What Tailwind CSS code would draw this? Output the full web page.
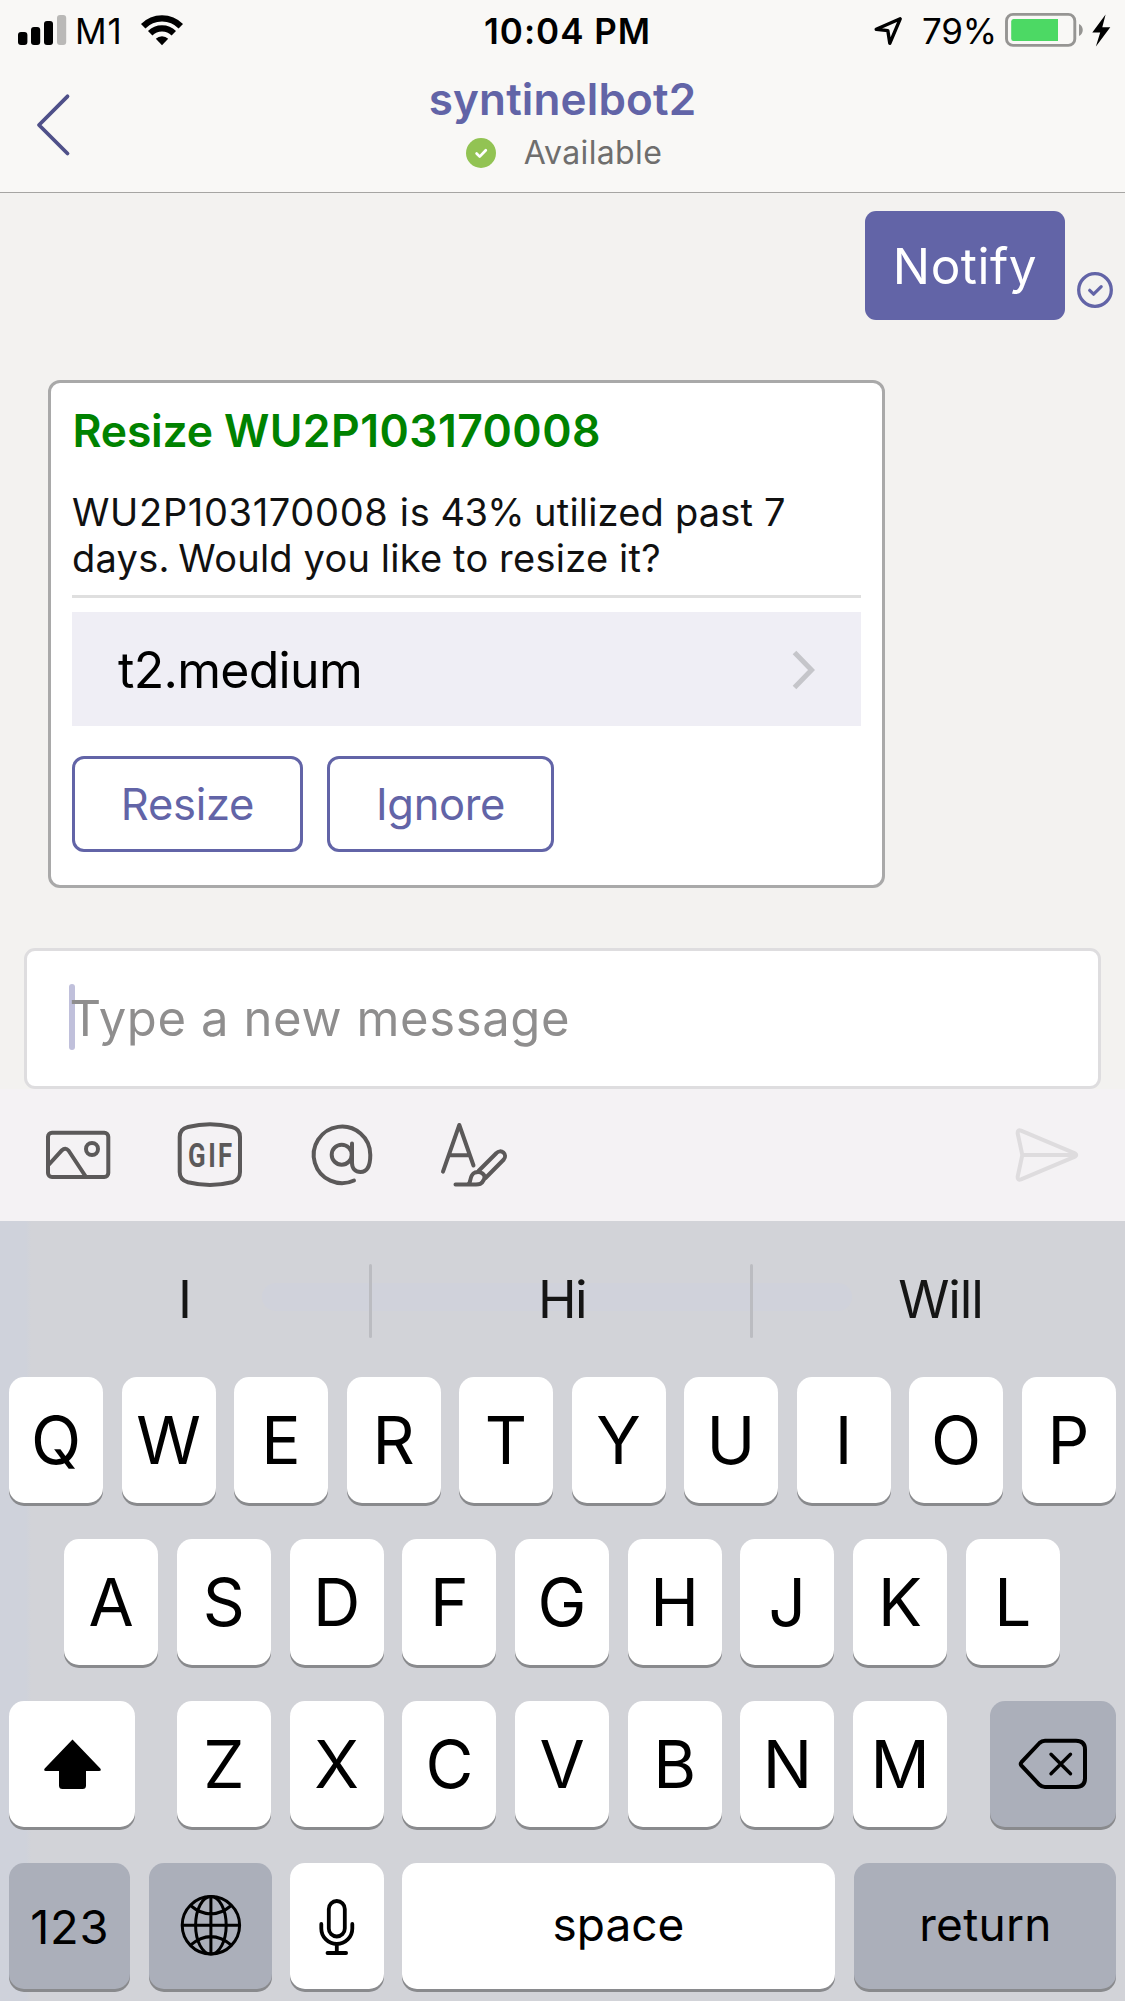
<!DOCTYPE html>
<html lang="en">
<head>
<meta charset="utf-8">
<title>syntinelbot2</title>
<script src="https://cdn.jsdelivr.net/npm/@tailwindcss/browser@4"></script>
</head>
<body class="w-[1125px] h-[2001px] overflow-hidden flex flex-col bg-[#f3f2f0] font-['Inter',sans-serif] text-black">

<header class="shrink-0 h-[193px] bg-[#f9f8f6] border-b border-[#a6a5a3]">
  <!-- Status bar -->
  <div class="h-[62px] flex items-center text-[35px] leading-[62px] whitespace-nowrap">
    <div class="flex items-center w-[484px] pl-[17px]">
      <svg class="w-[58px] h-[62px]" viewBox="17 0 58 62">
        <rect x="18" y="32" width="9.4" height="13" rx="3"/><rect x="31" y="27" width="9.2" height="18" rx="3"/><rect x="44" y="21" width="9" height="24" rx="3"/><rect x="57" y="15" width="9.2" height="30" rx="3" fill="#bab9b7"/>
      </svg>
      <span class="w-[63px] tracking-[0.8px]">M1</span>
      <svg class="w-[50px] h-[62px]" viewBox="138 0 50 62" fill="none" stroke="#000" stroke-width="6.2">
        <path d="M143.2 26.2A26.4 26.4 0 0 1 180.8 26.2M150.2 33.2A16.6 16.6 0 0 1 173.8 33.2"/>
        <path d="M155.8 38.8A8.8 8.8 0 0 1 168.200 38.800L162 45.200Z" fill="#000" stroke="none"/>
      </svg>
    </div>
    <span class="w-[388px] font-semibold tracking-[1px]">10:04 PM</span>
    <svg class="w-[50px] h-[62px]" viewBox="872 0 50 62" fill="none" stroke="#000" stroke-width="3.400" stroke-linejoin="round">
      <path d="M900.2 18.800L876.200 29.200L887.800 30.600L889.800 43.300Z"/>
    </svg>
    <span class="w-[81px] tracking-[-0.2px]">79%</span>
    <svg class="w-[112px] h-[62px]" viewBox="1003 0 112 62">
      <rect x="1006.5" y="14.400" width="68.300" height="31" rx="6.500" fill="none" stroke="#969593" stroke-width="2.900"/>
      <path d="M1013.500 19H1058V41H1013.500Q1011.200 41 1011.200 38.500V21.500Q1011.200 19 1013.500 19Z" fill="#4cd964"/>
      <path d="M1079 24C1084 26 1084 34 1079 36Z" fill="#969593"/>
      <path d="M1105.600 14.500L1092.300 32.500H1100.200L1095.900 46.500L1110.300 27.200H1102.300Z"/>
    </svg>
  </div>
  <!-- Chat title -->
  <div class="h-[130px] flex">
    <button class="w-[120px] h-[130px]" aria-label="Back">
      <svg class="w-[120px] h-[130px]" viewBox="0 62 120 130" fill="none" stroke="#4f5089" stroke-width="3.800" stroke-linecap="round" stroke-linejoin="round"><path d="M67.500 96.300L39 125L67.500 153.500"/></svg>
    </button>
    <div class="flex-1 flex flex-col items-center pt-[10px]">
      <h1 class="text-[44px] leading-[54px] font-semibold tracking-[0.15px] text-[#6264a7]">syntinelbot2</h1>
      <div class="flex items-center gap-[28px] h-[53px] text-[32px] tracking-[0.35px] text-[#6f6e6d] pl-[3px]">
        <svg class="w-[30px] h-[30px]" viewBox="0 0 30 30"><circle cx="15" cy="15" r="15" fill="#92c353"/><path d="M10.600 15.500L13.700 18.600L19.800 12.300" fill="none" stroke="#fff" stroke-width="2.700" stroke-linecap="round" stroke-linejoin="round"/></svg>
        <span>Available</span>
      </div>
    </div>
    <div class="w-[120px]"></div>
  </div>
</header>

<main class="shrink-0 h-[755px] flex flex-col">
  <div class="flex justify-end pt-[18px] pr-[12px]">
    <div class="w-[200px] h-[109px] rounded-[11px] bg-[#6264a7] text-white text-[49.5px] tracking-[0.5px] flex items-center justify-center pt-px">Notify</div>
    <svg class="w-[36px] h-[36px] mt-[61px] ml-[12px]" viewBox="0 0 36 36" fill="none" stroke="#6264a7" stroke-linecap="round" stroke-linejoin="round"><circle cx="18" cy="18" r="16.300" stroke-width="3.300"/><path d="M12.700 18.300L16.600 22.200L24.200 14.700" stroke-width="3.200"/></svg>
  </div>

  <!-- Adaptive card -->
  <section class="ml-[48px] mt-[60px] w-[837px] h-[508px] rounded-[12px] border-3 border-[#a9a9a9] bg-white px-[21px] flex flex-col">
    <h2 class="mt-[21px] text-[44.5px] leading-[54px] font-semibold tracking-[-0.200px] text-[#008200] whitespace-nowrap pl-[0.500px]">Resize <span class="tracking-[0.430px]">WU2P103170008</span></h2>
    <p class="mt-[31px] text-[38px] leading-[46px] text-[#111] whitespace-nowrap"><span class="tracking-[0.660px]">WU2P103170008 is</span><span class="tracking-[-0.600px]"> 43% </span><span class="tracking-[0.200px]">utilized past 7</span><br><span class="tracking-[0.260px] [word-spacing:-0.300px]"><span class="mr-[-2px]">days. </span>Would you like to resize it?</span></p>
    <div class="mt-[14px] h-[3px] bg-[#dfdfdf]"></div>
    <div class="mt-[14px] h-[114px] bg-[#efeef5] flex items-center justify-between pl-[46px] pr-[42px] pt-[2px] text-[50px] tracking-[-0.7px]">
      <span>t2.medium</span>
      <svg class="w-[30px] h-[44px]" viewBox="0 0 30 44" fill="none" stroke="#c5c5ca" stroke-width="5"><path d="M5.500 4.500L22.500 22L5.500 39.500"/></svg>
    </div>
    <div class="mt-[30px] flex gap-[24px] text-[43.5px] text-[#6264a7]">
      <button class="w-[231px] h-[96px] rounded-[12px] border-3 border-[#6264a7] tracking-[-0.26px] pt-[2px]">Resize</button>
      <button class="w-[227px] h-[96px] rounded-[12px] border-3 border-[#6264a7] tracking-[-0.36px] pt-[2px]">Ignore</button>
    </div>
  </section>
</main>

<!-- Message box -->
<div class="shrink-0 mx-[24px] h-[141px] rounded-[11px] border-3 border-[#dedddf] bg-white flex items-center relative">
  <span class="absolute left-[42px] top-[33px] w-[6px] h-[66px] rounded-full bg-[#c0c0db]"></span>
  <span class="relative pl-[42.500px] text-[49px] tracking-[0.61px] text-[#8f8e8e]">Type a new message</span>
</div>

<!-- Compose tools -->
<div class="shrink-0 h-[132px] bg-[#f4f2f4] flex items-center justify-between pl-[40px] pr-[40px]">
  <svg class="w-[480px] h-[132px]" viewBox="40 1089 480 132" fill="none" stroke="#5b5959" stroke-width="4" stroke-linecap="round" stroke-linejoin="round">
    <rect x="48" y="1132.700" width="60.300" height="44.300" rx="4"/>
    <path d="M48.500 1165L62 1150.200Q65.300 1147 68.500 1150.500L86 1177"/>
    <circle cx="92" cy="1149" r="6"/>
    <path d="M188 1127Q210 1121.500 232 1127Q240 1129 240 1137V1172Q240 1180 232 1182.300Q210 1187.700 188 1182.300Q179.700 1180 179.700 1172V1137Q179.700 1129 188 1127Z"/>
    <g transform="translate(188 1167) scale(.76 1)"><text x="0 26.500 39.500" y="0" font-family="Roboto" font-weight="700" font-size="34" fill="#5b5959" stroke="none">GIF</text></g>
    <path d="M354 1180.500A28.300 28.300 0 1 1 370.300 1155C370.300 1166 367 1172 360.500 1172C355.500 1172 352 1168.500 352 1163V1143.500"/>
    <circle cx="341.700" cy="1154.700" r="10"/>
    <path d="M443 1171.700L459.300 1125L473.500 1165.500M450 1155.300H469"/>
    <path d="M478.500 1171L496.500 1153A4.800 4.800 0 0 1 503.800 1159.500L485.500 1178"/>
    <path d="M455.500 1184.500H467C472.500 1184 468 1175.500 475 1172.500C481 1170.500 486.500 1175 484 1179.500C481.500 1184.500 479 1184.500 476 1184.500H466"/>
  </svg>
  <svg class="w-[75px] h-[132px]" viewBox="1010 1089 75 132" fill="none" stroke="#dedcde" stroke-width="4" stroke-linecap="round" stroke-linejoin="round">
    <path d="M1075 1153.300L1021 1130.600Q1017.300 1129.500 1017.700 1133.500L1022.300 1155L1017.700 1176.500Q1017.300 1180.500 1021 1179.400L1075 1156.700Q1077.500 1155 1075 1153.300ZM1022.300 1155H1075"/>
  </svg>
</div>

<!-- Keyboard -->
<div class="shrink-0 relative h-[780px] bg-[linear-gradient(90deg,#cfd2db_26px,#d2d3d8_31px)]">
  <div class="absolute left-[262px] top-[62px] w-[590px] h-[28px] rounded-full bg-[#d0d2db]"></div>
  <div class="relative h-[156px] flex items-center text-[52px] text-[#151515]">
    <div class="w-[369px] text-center pt-[2px] pl-px">I</div>
    <div class="w-[3px] h-[74px] mt-[3px] rounded-full bg-[#bbbcc1]"></div>
    <div class="w-[378px] text-center pt-[2px] pl-[2px] tracking-[-1.500px]">Hi</div>
    <div class="w-[3px] h-[74px] mt-[3px] rounded-full bg-[#bbbcc1]"></div>
    <div class="w-[372px] text-center pt-[2px] pl-[3px] tracking-[-1.070px]">Will</div>
  </div>
  <div class="relative flex flex-col gap-[36px] text-[65.6px] leading-[126px]">
    <div class="flex pl-[9px] gap-[18.5px]" data-keys="QWERTYUIOP"></div>
    <div class="flex pl-[64.200px] gap-[18.700px]" data-keys="ASDFGHJKL"></div>
    <div class="flex pl-[9px]">
      <div class="w-[126px] h-[126px] rounded-[15px] bg-white shadow-[0_3px_0_#898a8d]">
        <svg class="w-[126px] h-[126px]" viewBox="9 1701 126 126"><path d="M72.500 1739.500L100.300 1768.500Q101.800 1771 99 1771H86V1785.500Q86 1789 82.500 1789H62.500Q59 1789 59 1785.500V1771H46Q43.200 1771 44.700 1768.500Z"/></svg>
      </div>
      <div class="flex ml-[42px] gap-[18.700px]" data-keys="ZXCVBNM"></div>
      <div class="ml-[42.800px] w-[126px] h-[126px] rounded-[15px] bg-[#abafba] shadow-[0_3px_0_#898a8d]">
        <svg class="w-[126px] h-[126px]" viewBox="990 1701 126 126" fill="none" stroke="#000" stroke-width="4" stroke-linecap="round" stroke-linejoin="round"><path d="M1021.500 1762.200L1039.500 1743Q1041.800 1740.700 1045 1740.700H1076Q1085 1740.700 1085 1749.500V1778.300Q1085 1787 1076 1787H1045Q1041.800 1787 1039.500 1784.800L1021.500 1765.600Q1020 1763.900 1021.500 1762.200Z"/><path d="M1051 1754.300L1070.500 1773.800M1070.500 1754.300L1051 1773.800" stroke-width="3.400"/></svg>
      </div>
    </div>
    <div class="flex pl-[9px] text-[46px]">
      <div class="w-[120.500px] h-[126px] rounded-[15px] bg-[#abafba] shadow-[0_3px_0_#898a8d] text-center text-[47px] tracking-[0.800px] pt-px pl-px leading-[126px]">123</div>
      <div class="ml-[19px] w-[123px] h-[126px] rounded-[15px] bg-[#abafba] shadow-[0_3px_0_#898a8d]">
        <svg class="w-[123px] h-[126px]" viewBox="148.500 1863 123 126" fill="none" stroke="#000" stroke-width="3"><circle cx="210.400" cy="1925.300" r="28.700"/><ellipse cx="210.400" cy="1925.300" rx="15.300" ry="28.700"/><path d="M210.400 1896.600V1954M181.700 1925.300H239.100M190 1905.500Q210.400 1922.500 230.800 1905.500M190 1945.100Q210.400 1928.100 230.800 1945.100"/></svg>
      </div>
      <div class="ml-[18px] w-[94px] h-[126px] rounded-[15px] bg-white shadow-[0_3px_0_#898a8d]">
        <svg class="w-[94px] h-[126px]" viewBox="289.500 1863 94 126" fill="none" stroke="#000" stroke-width="3.800" stroke-linecap="round"><rect x="328.300" y="1901" width="16" height="35.500" rx="8"/><path d="M320.800 1924V1928.500A15.500 15.500 0 0 0 351.800 1928.500V1924M336.300 1944V1953M327 1953H345.600"/></svg>
      </div>
      <div class="ml-[18.500px] w-[433px] h-[126px] rounded-[15px] bg-white shadow-[0_3px_0_#898a8d] text-center leading-[123px]">space</div>
      <div class="ml-[18.500px] w-[262px] h-[126px] rounded-[15px] bg-[#abafba] shadow-[0_3px_0_#898a8d] text-center leading-[123px] tracking-[0.300px] pl-[2px]">return</div>
    </div>
  </div>
</div>

<script>
  // Fill each letter row with its keys
  document.querySelectorAll('[data-keys]').forEach(function (row) {
    row.dataset.keys.split('').forEach(function (letter) {
      var key = document.createElement('div');
      key.className = 'w-[94px] h-[126px] rounded-[15px] bg-white shadow-[0_3px_0_#898a8d] text-center';
      key.textContent = letter;
      row.appendChild(key);
    });
  });
</script>
</body>
</html>
